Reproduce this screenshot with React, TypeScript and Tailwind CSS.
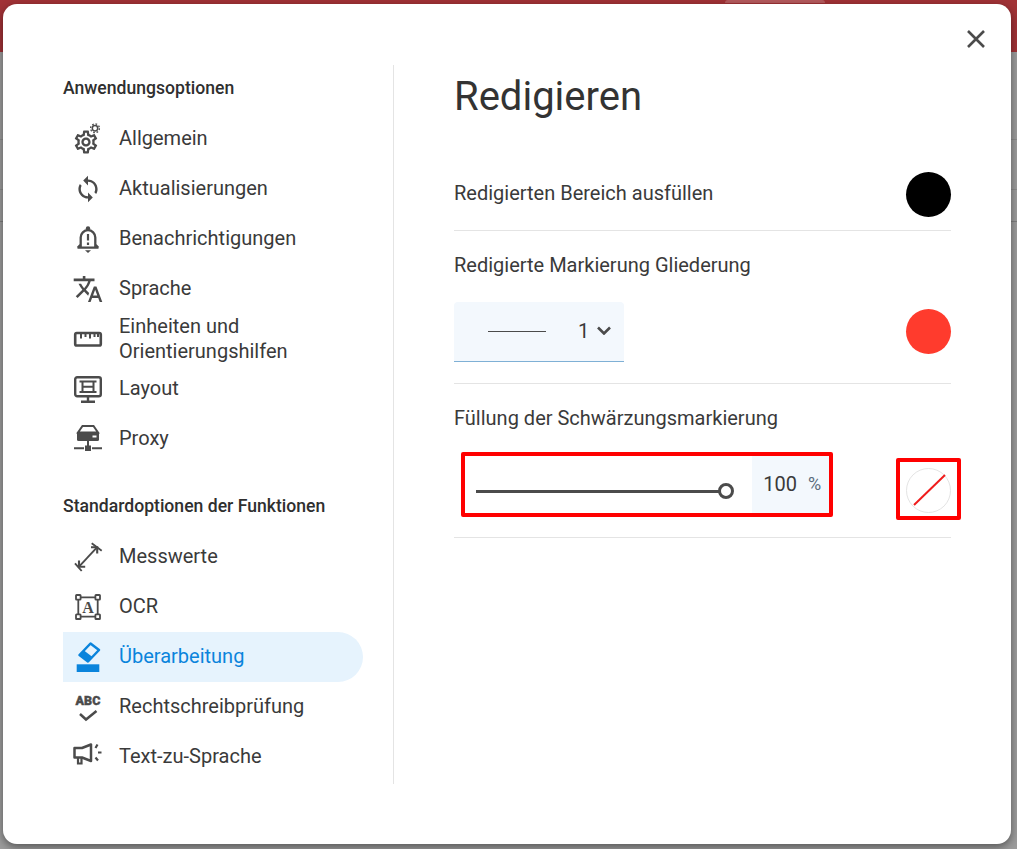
import React from "react";

const GEAR =
  "M19.43 12.98c.04-.32.07-.64.07-.98 0-.34-.03-.66-.07-.98l2.11-1.65c.19-.15.24-.42.12-.64l-2-3.46c-.09-.16-.26-.25-.44-.25-.06 0-.12.01-.17.03l-2.49 1c-.52-.4-1.08-.73-1.69-.98l-.38-2.65C14.46 2.18 14.25 2 14 2h-4c-.25 0-.46.18-.49.42l-.38 2.65c-.61.25-1.17.59-1.69.98l-2.49-1c-.06-.02-.12-.03-.18-.03-.17 0-.34.09-.43.25l-2 3.46c-.13.22-.07.49.12.64l2.11 1.65c-.04.32-.07.65-.07.98 0 .33.03.66.07.98l-2.11 1.65c-.19.15-.24.42-.12.64l2 3.46c.09.16.26.25.44.25.06 0 .12-.01.17-.03l2.49-1c.52.4 1.08.73 1.69.98l.38 2.65c.03.24.24.42.49.42h4c.25 0 .46-.18.49-.42l.38-2.65c.61-.25 1.17-.59 1.69-.98l2.49 1c.06.02.12.03.18.03.17 0 .34-.09.43-.25l2-3.46c.12-.22.07-.49-.12-.64l-2.11-1.65zm-1.98-1.71c.04.31.05.52.05.73 0 .21-.02.43-.05.73l-.14 1.13.89.7 1.08.84-.7 1.21-1.27-.51-1.04-.42-.9.68c-.43.32-.84.56-1.25.73l-1.06.43-.16 1.13-.2 1.35h-1.4l-.19-1.35-.16-1.13-1.06-.43c-.43-.18-.83-.41-1.23-.71l-.91-.7-1.06.43-1.27.51-.7-1.21 1.08-.84.89-.7-.14-1.13c-.03-.31-.05-.54-.05-.74s.02-.43.05-.73l.14-1.13-.89-.7-1.08-.84.7-1.21 1.27.51 1.04.42.9-.68c.43-.32.84-.56 1.25-.73l1.06-.43.16-1.13.2-1.35h1.39l.19 1.35.16 1.13 1.06.43c.43.18.83.41 1.23.71l.91.7 1.06-.43 1.27-.51.7 1.21-1.07.85-.89.7.14 1.13zM12 8c-2.21 0-4 1.79-4 4s1.79 4 4 4 4-1.79 4-4-1.79-4-4-4zm0 6c-1.1 0-2-.9-2-2s.9-2 2-2 2 .9 2 2-.9 2-2 2z";
const SYNC =
  "M12 4V1L8 5l4 4V6c3.31 0 6 2.69 6 6 0 1.01-.25 1.97-.7 2.8l1.46 1.46C19.54 15.03 20 13.57 20 12c0-4.42-3.58-8-8-8zm0 14c-3.31 0-6-2.69-6-6 0-1.01.25-1.97.7-2.8L5.24 7.74C4.46 8.97 4 10.43 4 12c0 4.42 3.58 8 8 8v3l4-4-4-4v3z";
const TRANSLATE =
  "M12.87 15.07l-2.54-2.51.03-.03c1.74-1.94 2.98-4.17 3.71-6.53H17V4h-7V2H8v2H1v1.99h11.17C11.5 7.92 10.44 9.75 9 11.35 8.07 10.32 7.3 9.19 6.69 8h-2c.73 1.63 1.73 3.17 2.98 4.56l-5.09 5.02L4 19l5-5 3.11 3.11.76-2.04zM18.5 10h-2L12 22h2l1.12-3h4.75L21 22h2l-4.5-12zm-2.62 7l1.62-4.33L19.12 17h-3.24z";

const INK = "#4b4b4b";
const BLUE = "#0a84dc";

const Svg = ({ children }: { children: React.ReactNode }) => (
  <svg width="32" height="32" viewBox="0 0 32 32" fill="none" stroke={INK} strokeWidth="2" className="overflow-visible">
    {children}
  </svg>
);

const icons: Record<string, React.ReactNode> = {
  gear: (
    <Svg>
      <path d={GEAR} fill={INK} stroke="none" transform="translate(0.2 6.2) scale(1.15)" />
      <circle cx="23" cy="6.3" r="2.7" strokeWidth="1.5" />
      <circle cx="23" cy="6.3" r="4.4" strokeWidth="1.3" strokeDasharray="1.7 1.75" />
    </Svg>
  ),
  sync: (
    <Svg>
      <path d={SYNC} fill={INK} stroke="none" transform="translate(1.6 2.6) scale(1.2)" />
    </Svg>
  ),
  bell: (
    <Svg>
      <path d="M5.5 25.7h21M8.7 25.5V15.5a7.3 7.3 0 0 1 14.6 0v10M8.7 22.5l-3 3.2M23.3 22.5l3 3.2" strokeWidth="2.3" />
      <circle cx="16" cy="6.5" r="2.2" fill={INK} stroke="none" />
      <path d="M13 28.3h6l-3 2.7z" fill={INK} stroke="none" />
      <path d="M16 12v6.5M16 20.5v2.4" strokeWidth="2.2" />
    </Svg>
  ),
  translate: (
    <Svg>
      <path d={TRANSLATE} fill={INK} stroke="none" transform="translate(0.4 1.4) scale(1.3)" />
    </Svg>
  ),
  ruler: (
    <Svg>
      <rect x="3.2" y="11" width="25.6" height="12.5" rx="1.6" strokeWidth="2.6" />
      <path d="M9 11v5.5M13.5 11v4M18 11v5.5M22.5 11v4M26 11v4" strokeWidth="2" />
    </Svg>
  ),
  monitor: (
    <Svg>
      <rect x="3.2" y="5.2" width="25.6" height="19" rx="2" strokeWidth="2.4" />
      <path d="M16 24v5M9 29.8h14" strokeWidth="2.4" />
      <path d="M7.5 9.5h17M7.5 20h17M10.5 9.5v10.5M21.5 9.5v10.5M10.5 14.7h11" strokeWidth="2" />
    </Svg>
  ),
  proxy: (
    <Svg>
      <path d="M10.5 4h11l4.5 6.5H6z" strokeWidth="2" />
      <path d="M5 10.5h22v7a1.5 1.5 0 0 1-1.5 1.5h-19A1.5 1.5 0 0 1 5 17.5z" fill={INK} stroke="none" />
      <rect x="20.5" y="13.5" width="4" height="2" fill="#fff" stroke="none" />
      <path d="M16 19v5M2 26.3h10M20 26.3h10" strokeWidth="2" />
      <rect x="13" y="23.5" width="6" height="5.5" fill={INK} stroke="none" />
    </Svg>
  ),
  measure: (
    <Svg>
      <path d="M3 23.3l6.7 7.7M19.7 3.3l10 7.4" strokeWidth="1.9" />
      <path d="M7 26.6L25 7.4" strokeWidth="1.9" />
      <path d="M7 20.5v6.2h6.2M19 7.2h6.2v6.2" strokeWidth="2.1" />
    </Svg>
  ),
  ocr: (
    <Svg>
      <path d="M8.5 7.3h15.5M8.5 26.7h15.5M6.3 9.5v15M25.7 9.5v15" strokeWidth="1.8" />
      <g strokeWidth="1.8" fill="#fff">
        <rect x="4" y="5" width="4.6" height="4.6" rx=".6" />
        <rect x="23.4" y="5" width="4.6" height="4.6" rx=".6" />
        <rect x="4" y="24.4" width="4.6" height="4.6" rx=".6" />
        <rect x="23.4" y="24.4" width="4.6" height="4.6" rx=".6" />
      </g>
      <text x="16" y="22.5" textAnchor="middle" stroke="none" fill={INK} fontSize="16" fontWeight="700" fontFamily="'Liberation Serif', serif">A</text>
    </Svg>
  ),
  eraser: (
    <svg width="32" height="32" viewBox="0 0 32 32" fill="none" className="overflow-visible">
      <path d="M18.5 3.5L27 10 16 21.5 7.5 15z" stroke={BLUE} strokeWidth="2.5" strokeLinejoin="round" />
      <path d="M7.5 15L16 21.5 20.5 17 12 10.5z" fill={BLUE} />
      <rect x="4.7" y="24.3" width="22.6" height="7.7" fill={BLUE} />
    </svg>
  ),
  abc: (
    <Svg>
      <text x="16" y="15" textAnchor="middle" stroke={INK} strokeWidth="0.4" fill={INK} fontSize="12.5" fontWeight="900" fontFamily="Roboto, sans-serif">ABC</text>
      <path d="M8 24l6 5.5 10.5-8.5" strokeWidth="2.5" />
    </Svg>
  ),
  speaker: (
    <Svg>
      <path d="M2.5 8h7.5l9-3.5v16.5l-9-3.5h-7.5z" strokeWidth="2.5" strokeLinejoin="round" />
      <path d="M6 17.5v6h3.5v-6" strokeWidth="2.2" />
      <path d="M25.5 4.5l-2 3.5M26 12.5h3.5M23.5 17.5l2.5 3" strokeWidth="2.2" />
    </Svg>
  ),
};

const Item = ({ icon, label, active, lift }: { icon: string; label: React.ReactNode; active?: boolean; lift?: boolean }) => (
  <div className={`flex h-[50px] w-[300px] items-center rounded-r-[25px] ${lift ? "pb-[2px]" : ""} ${active ? "bg-[#e6f3fd] text-[#0a84dc]" : "text-[#3a3a3a]"}`}>
    <div className="flex w-[50px] shrink-0 justify-center">{icons[icon]}</div>
    <div className="ml-[6px] text-[20px] leading-[25px]">{label}</div>
  </div>
);

const GroupTitle = ({ children, lift }: { children: React.ReactNode; lift?: boolean }) => (
  <div className={`flex h-[48px] items-center text-[17.6px] font-medium text-[#2f2f2f] ${lift ? "pb-[4px]" : "pb-[2px]"}`}>{children}</div>
);

const Line = () => <div className="h-px w-full bg-[#e4e4e4]" />;

export default function App() {
  return (
    <div className="relative h-[849px] w-[1017px] overflow-hidden bg-[#9c9c9c] font-['Roboto',sans-serif]">
      {/* dimmed page behind the dialog */}
      <div className="h-[52px] bg-[#a13236]">
        <div className="ml-[725px] h-[3px] w-[100px] rounded-t bg-[#b55a5d]" />
      </div>
      <div className="h-[88px] border-b border-[#8c8c8c]" />
      <div className="h-[50px] border-b border-[#8c8c8c]" />
      <div className="h-[32px] border-b border-[#7e7e7e]" />

      {/* dialog */}
      <div className="absolute left-[3px] top-[4px] h-[840px] w-[1008px] rounded-[14px] bg-white pl-[60px] pt-[61px] shadow-[0_3px_8px_rgba(0,0,0,0.45)]">
        <button className="absolute right-[25px] top-[25px] flex h-5 w-5 items-center justify-center">
          <svg width="20" height="20" viewBox="0 0 20 20" fill="none" stroke={INK} strokeWidth="2.6">
            <path d="M2 2l16 16M18 2L2 18" />
          </svg>
        </button>

        <div className="flex items-start">
          <aside className="h-[719px] w-[331px] border-r border-[#e4e4e4]">
            <GroupTitle>Anwendungsoptionen</GroupTitle>
            <Item icon="gear" label="Allgemein" />
            <Item icon="sync" label="Aktualisierungen" />
            <Item icon="bell" label="Benachrichtigungen" />
            <Item icon="translate" label="Sprache" />
            <Item icon="ruler" label={<div className="pt-[2px]">Einheiten und<br />Orientierungshilfen</div>} />
            <Item icon="monitor" label="Layout" />
            <Item icon="proxy" label="Proxy" />
            <div className="h-[21px]" />
            <GroupTitle lift>Standardoptionen der Funktionen</GroupTitle>
            <Item lift icon="measure" label="Messwerte" />
            <Item lift icon="ocr" label="OCR" />
            <Item lift icon="eraser" label="Überarbeitung" active />
            <Item lift icon="abc" label="Rechtschreibprüfung" />
            <Item lift icon="speaker" label="Text-zu-Sprache" />
          </aside>

          <main className="ml-[60px] w-[497px] text-[#3a3a3a]">
            <h1 className="flex h-[64px] items-center text-[40px] font-normal text-[#333]">Redigieren</h1>

            <div className="mt-[43px] flex h-[45px] items-center justify-between text-[20px]">
              <span className="-mt-[4px]">Redigierten Bereich ausfüllen</span>
              <div className="h-[45px] w-[45px] rounded-full bg-black" />
            </div>
            <div className="h-[13px]" />
            <Line />

            <div className="flex h-[68px] items-center text-[20px]">Redigierte Markierung Gliederung</div>
            <div className="mt-[3px] flex items-center justify-between">
              <div className="flex h-[60px] w-[170px] items-center rounded-t border-b border-[#7fb0d5] bg-[#f3f8fd]">
                <div className="ml-[34px] h-px w-[58px] bg-[#4b4b4b]" />
                <span className="-mt-[2px] ml-[32px] text-[20px] text-[#3a3a3a]">1</span>
                <svg width="14" height="9" viewBox="0 0 14 9" fill="none" stroke={INK} strokeWidth="2.6" className="-mt-[2px] ml-[8px]">
                  <path d="M1 1.5l6 6 6-6" />
                </svg>
              </div>
              <div className="mb-[2px] h-[45px] w-[45px] rounded-full bg-[#ff3b2d]" />
            </div>
            <div className="h-[21px]" />
            <Line />

            <div className="flex h-[68px] items-center text-[20px]">Füllung der Schwärzungsmarkierung</div>
            <div className="flex h-[85px] items-start justify-between">
              <div className="ml-[7px] flex h-[65px] w-[372px] items-stretch rounded-[2px] border-[4px] border-[#ff0000]">
                <div className="ml-[11px] flex w-[258px] items-center pt-[13px]">
                  <div className="relative h-[3px] w-[250px] bg-[#4b4b4b]">
                    <div className="absolute -right-[8px] -top-[6.5px] h-4 w-4 rounded-full border-[3px] border-[#4b4b4b] bg-white" />
                  </div>
                </div>
                <div className="ml-[19px] flex w-[77px] items-center bg-[#f3f8fd] pb-[2px]">
                  <span className="ml-[11px] text-[20px] text-[#3a3a3a]">100</span>
                  <span className="ml-[11px] text-[18px] text-[#5a6b7b]">%</span>
                </div>
              </div>
              <div className="-mr-[10px] mt-[6px] flex h-[62px] w-[65px] justify-center rounded-[2px] border-[4px] border-[#ff0000] pt-[6px]">
                <div className="h-[45px] w-[45px] rounded-full border border-[#e4e4e4]">
                  <svg width="43" height="43" viewBox="0 0 43 43" stroke="#f01c1c" strokeWidth="2">
                    <path d="M7 36L38 6" />
                  </svg>
                </div>
              </div>
            </div>
            <Line />
          </main>
        </div>
      </div>
    </div>
  );
}
